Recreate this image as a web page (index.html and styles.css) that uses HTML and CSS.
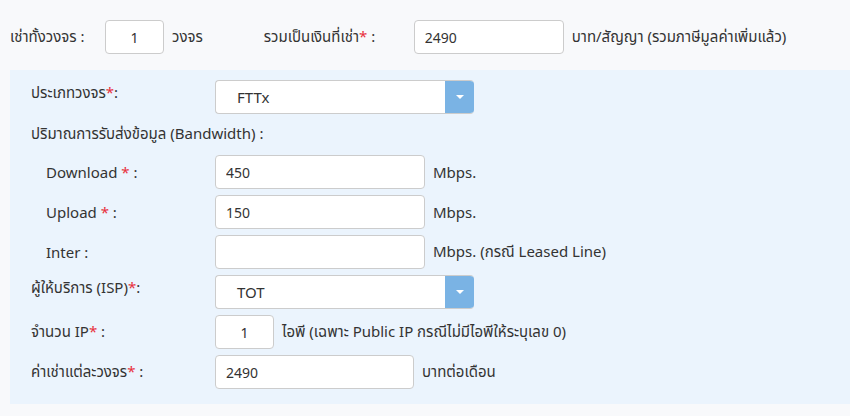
FILE: index.html
```html
<!DOCTYPE html>
<html lang="th">
<head>
  <meta charset="UTF-8" />
  <title>ข้อมูลวงจร</title>
  <link rel="stylesheet" href="styles.css">
</head>
<body>
  <div class="top-row">
    <span class="label-top">เช่าทั้งวงจร :</span>
    <input class="field field-xs center" type="text" value="1">
    <span class="unit">วงจร</span>
    <span class="label-sum">รวมเป็นเงินที่เช่า<span class="req">*</span> :</span>
    <input class="field field-md" type="text" value="2490">
    <span class="unit">บาท/สัญญา (รวมภาษีมูลค่าเพิ่มแล้ว)</span>
  </div>

  <div class="panel">
    <div class="row">
      <label class="label top">ประเภทวงจร<span class="req">*</span>:</label>
      <div class="select"><span class="select-text">FTTx</span><span class="select-btn"><i class="caret"></i></span></div>
    </div>
    <div class="row row-title">
      <label class="label-wide">ปริมาณการรับส่งข้อมูล (Bandwidth) :</label>
    </div>
    <div class="row">
      <label class="label sub">Download <span class="req">*</span> :</label>
      <input class="field field-lg" type="text" value="450">
      <span class="unit">Mbps.</span>
    </div>
    <div class="row">
      <label class="label sub">Upload <span class="req">*</span> :</label>
      <input class="field field-lg" type="text" value="150">
      <span class="unit">Mbps.</span>
    </div>
    <div class="row">
      <label class="label sub">Inter :</label>
      <input class="field field-lg" type="text" value="">
      <span class="unit">Mbps. (กรณี Leased Line)</span>
    </div>
    <div class="row">
      <label class="label top">ผู้ให้บริการ (ISP)<span class="req">*</span>:</label>
      <div class="select"><span class="select-text">TOT</span><span class="select-btn"><i class="caret"></i></span></div>
    </div>
    <div class="row">
      <label class="label">จำนวน IP<span class="req">*</span> :</label>
      <input class="field field-xs center" type="text" value="1">
      <span class="unit">ไอพี (เฉพาะ Public IP กรณีไม่มีไอพีให้ระบุเลข 0)</span>
    </div>
    <div class="row">
      <label class="label">ค่าเช่าแต่ละวงจร<span class="req">*</span> :</label>
      <input class="field field-price" type="text" value="2490">
      <span class="unit">บาทต่อเดือน</span>
    </div>
  </div>
</body>
</html>
```

FILE: styles.css
```css
body { margin: 0; background: #f8f9fb; font-family: "Noto Sans", "Noto Sans Thai", sans-serif; font-size: 15px; color: #333; }
.req { color: #e8303c; }

.top-row { display: flex; align-items: center; height: 34px; padding: 20px 0 16px 10px; }
.label-top { width: 95px; }
.label-sum { margin-left: 61px; width: 150px; }
.unit { margin-left: 8px; white-space: nowrap; }

.field { box-sizing: border-box; height: 34px; border: 1px solid #ccc; border-radius: 4px; background: #fff;
         padding: 0 10px; font: inherit; font-size: 14px; color: #333; outline: none; }
.field.center { text-align: center; }
.field-xs { width: 59px; }
.field-md { width: 150px; }
.field-lg { width: 210px; }
.field-price { width: 199px; }

.panel { margin-left: 10px; background: #ebf4fd; padding: 10px 0 15px 21px; }
.row { display: flex; align-items: center; min-height: 34px; margin-bottom: 6px; }
.row:last-child { margin-bottom: 0; }
.row-title { min-height: 29px; }
.label { width: 184px; flex-shrink: 0; }
.label.top { align-self: flex-start; padding-top: 2px; }
.label.sub { box-sizing: border-box; padding-left: 15px; }

.select { box-sizing: border-box; display: flex; width: 259px; height: 34px; border: 1px solid #ccc; border-right: none;
          border-radius: 4px; background: #fff; overflow: hidden; }
.select-text { flex: 1; display: flex; align-items: center; padding-left: 21px; font-size: 15px; }
.select-btn { width: 29px; background: #7ab3e4; display: flex; align-items: center; justify-content: center; }
.caret { width: 0; height: 0; border-left: 4px solid transparent; border-right: 4px solid transparent; border-top: 4px solid #fff; }
```
